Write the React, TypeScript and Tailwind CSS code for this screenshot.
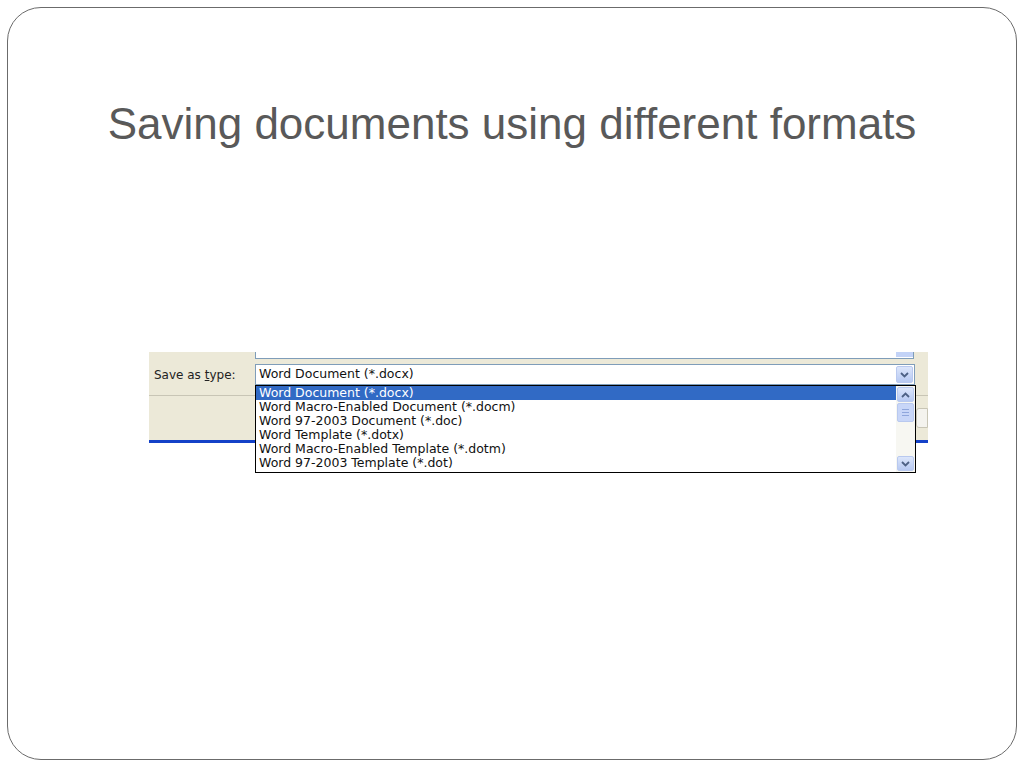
import React from "react";

const items = [
  "Word Document (*.docx)",
  "Word Macro-Enabled Document (*.docm)",
  "Word 97-2003 Document (*.doc)",
  "Word Template (*.dotx)",
  "Word Macro-Enabled Template (*.dotm)",
  "Word 97-2003 Template (*.dot)",
];

const Chev = ({ up }: { up?: boolean }) => (
  <svg width="9" height="6" viewBox="0 0 9 6">
    <path d={up ? "M1 5 L4.5 1.5 L8 5" : "M1 1 L4.5 4.5 L8 1"} fill="none" stroke="#4d6185" strokeWidth="1.8" />
  </svg>
);

const Btn = ({ up, h = 15 }: { up?: boolean; h?: number }) => (
  <div className="w-[17px] flex items-center justify-center rounded-[2px] border border-[#b9c9ef] bg-gradient-to-b from-[#dce6fb] to-[#b7c9f2]" style={{ height: h }}>
    <Chev up={up} />
  </div>
);

export default function App() {
  return (
    <div className="w-[1024px] h-[768px] bg-white p-[7px]" style={{ fontFamily: '"DejaVu Sans", sans-serif' }}>
      <div className="w-[1010px] h-[753px] border border-[#6b6b6b] rounded-[34px] flex flex-col items-center">
        <h1 className="mt-[90px] text-[44px] leading-[52px] text-[#595959] font-medium" style={{ fontFamily: '"Liberation Sans", sans-serif' }}>
          Saving documents using different formats
        </h1>
        <div className="mt-[202px] ml-[141px] self-start w-[779px] relative">
          <div className="h-[88px] bg-[#ece9d8] flex flex-col">
            <div className="ml-[106px] w-[659px] h-[7px] bg-white border-x border-b border-[#7f9db9] relative">
              <div className="absolute right-0 top-0 w-[17px] h-[5px] bg-[#c3d3f7]" />
            </div>
            <div className="flex items-center mt-[5px] h-[21px]">
              <div className="w-[106px] pl-[5px] text-[12px] text-[#222]">Save as <span className="underline">t</span>ype:</div>
              <div className="w-[660px] h-[21px] bg-white border border-[#7f9db9] flex items-center justify-between pl-[3px] pr-[1px]">
                <span className="text-[12.5px] text-[#111]">Word Document (*.docx)</span>
                <Btn h={17} />
              </div>
            </div>
            <div className="mt-[10px] border-t border-[#c8c5b5]" />
          </div>
          <div className="h-[3px] bg-[#1441c8]" />
          <div className="absolute left-[106px] top-[33px] w-[661px] h-[88px] bg-white border border-black flex">
            <div className="flex-1 flex flex-col">
              {items.map((t, i) => (
                <div key={t} className={`h-[14px] leading-[14px] pl-[3px] text-[12.5px] ${i === 0 ? "bg-[#316ac5] text-white" : "text-[#111]"}`}>{t}</div>
              ))}
            </div>
            <div className="w-[19px] bg-[#f7f7f2] flex flex-col items-center justify-between py-[1px]">
              <Btn up />
              <div className="flex-1 w-[17px] mt-[1px] flex flex-col">
                <div className="h-[19px] rounded-[2px] border border-[#b9c9ef] bg-[#c8d6f8] flex flex-col items-center justify-center gap-[2px]">
                  <div className="w-[7px] h-[1px] bg-[#8fa6dc]" /><div className="w-[7px] h-[1px] bg-[#8fa6dc]" /><div className="w-[7px] h-[1px] bg-[#8fa6dc]" />
                </div>
              </div>
              <Btn />
            </div>
          </div>
          <div className="absolute right-0 top-[56px] w-[12px] h-[20px] bg-[#f4f3ee] border border-[#c8c5b5] rounded-l-[3px]" />
        </div>
      </div>
    </div>
  );
}
